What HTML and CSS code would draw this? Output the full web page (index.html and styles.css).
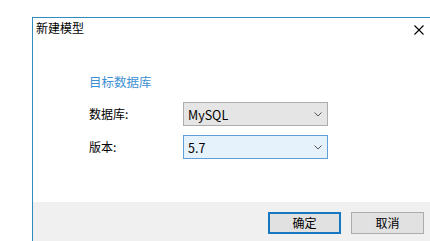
FILE: index.html
```html
<!DOCTYPE html>
<html lang="zh-CN">
<head>
<meta charset="utf-8">
<title>新建模型</title>
<link rel="stylesheet" href="styles.css">
</head>
<body>
<div class="screen">
  <div class="dialog">
    <div class="titlebar">
      <span class="title">新建模型</span>
      <svg class="close" width="10" height="10" viewBox="0 0 10 10"><path d="M0.5 0.5 L9.5 9.5 M9.5 0.5 L0.5 9.5" stroke="#000" stroke-width="1.1" fill="none"/></svg>
    </div>
    <div class="content">
      <div class="section">目标数据库</div>
      <div class="form">
        <div class="row">
          <span class="label">数据库:</span>
          <div class="combo combo-gray"><span>MySQL</span><svg class="chev" width="8" height="5" viewBox="0 0 8 5"><path d="M0.5 0.5 L4 4 L7.5 0.5" stroke="#555" stroke-width="1" fill="none"/></svg></div>
        </div>
        <div class="row">
          <span class="label">版本:</span>
          <div class="combo combo-hover"><span>5.7</span><svg class="chev" width="8" height="5" viewBox="0 0 8 5"><path d="M0.5 0.5 L4 4 L7.5 0.5" stroke="#555" stroke-width="1" fill="none"/></svg></div>
        </div>
      </div>
    </div>
    <div class="footer">
      <button class="btn btn-primary">确定</button>
      <button class="btn">取消</button>
    </div>
  </div>
</div>
</body>
</html>
```
FILE: styles.css
```css
* { box-sizing: border-box; }
html, body { margin: 0; padding: 0; background: #fff; }
body {
  width: 430px;
  height: 241px;
  overflow: hidden;
  font-family: "Noto Sans CJK SC", "Microsoft YaHei", sans-serif;
  font-size: 12px;
  color: #000;
}
.screen {
  padding: 17px 0 0 32px;
  height: 241px;
}
.dialog {
  height: 224px;
  border-top: 1px solid #2f8cbf;
  border-left: 1px solid #2f8cbf;
  background: #fff;
  display: flex;
  flex-direction: column;
}
.titlebar {
  height: 30px;
  display: flex;
  justify-content: space-between;
  align-items: flex-start;
  padding-left: 3px;
}
.title {
  margin-top: 4px;
  line-height: 12px;
}
.close {
  margin-top: 7px;
  margin-right: 6px;
}
.content {
  flex: 1;
  padding: 28px 0 0 56px;
}
.section {
  line-height: 12px;
  color: #3d90d3;
  font-size: 12.5px;
  margin-bottom: 14px;
}
.form {
  display: flex;
  flex-direction: column;
  gap: 9px;
}
.row {
  display: flex;
  align-items: center;
  height: 24px;
}
.label {
  width: 94px;
  line-height: 12px;
}
.combo {
  width: 145px;
  height: 24px;
  display: flex;
  align-items: center;
  justify-content: space-between;
  padding: 0 5px 0 4px;
  font-size: 12.5px;
}
.combo-gray {
  background: #e5e5e5;
  border: 1px solid #adadad;
}
.combo-hover {
  background: #e5f1fb;
  border: 1px solid #5f9fd6;
}
.chev { display: block; }
.footer {
  height: 39px;
  background: #f0f0f0;
  display: flex;
  justify-content: flex-end;
  align-items: flex-start;
  gap: 10px;
  padding: 10px 6px 0 0;
}
.btn {
  width: 73px;
  height: 22px;
  margin: 0;
  padding: 0;
  background: #e1e1e1;
  border: 1px solid #adadad;
  font-family: inherit;
  font-size: 12px;
  color: #000;
  line-height: 12px;
}
.btn-primary {
  border: 2px solid #1777c1;
}
```
